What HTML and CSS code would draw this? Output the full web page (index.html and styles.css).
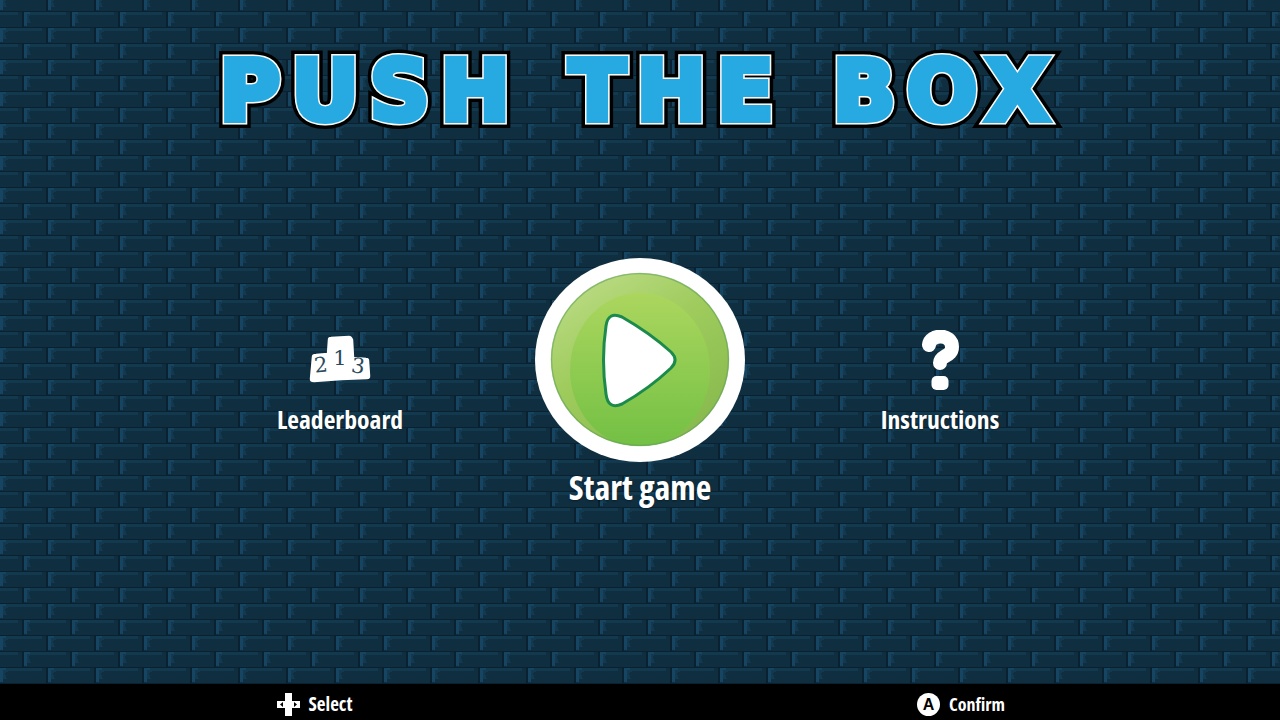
FILE: index.html
```html
<!DOCTYPE html>
<html lang="en">
<head>
<meta charset="utf-8">
<title>Push the Box</title>
<link rel="stylesheet" href="styles.css">
</head>
<body>
<div class="screen">
  <header class="title-wrap">
    <h1 class="title"><span class="title-black">PUSH THE BOX</span><span class="title-white" aria-hidden="true">PUSH THE BOX</span><span class="title-blue" aria-hidden="true">PUSH THE BOX</span></h1>
  </header>
  <main class="menu">
    <div class="item item-side">
      <svg class="icon" width="64" height="62" viewBox="0 -5 64 62">
        <path class="podium" d="M5 22 Q5 20 8 20 L20 19 L21 5 Q21 3 23 3 L41 2 Q43 2 44 5 L45 23 L58 24 Q60 24 60 26 L61 41 Q61 43 59 43 L33 44 L6 46 Q3 46 3 44 Z"/>
        <text class="digit" x="13" y="37" transform="rotate(-6 13 30)">2</text>
        <text class="digit" x="32" y="30">1</text>
        <text class="digit" x="50" y="38" transform="rotate(8 50 32)">3</text>
      </svg>
      <span class="label">Leaderboard</span>
    </div>
    <div class="item">
      <svg class="play" width="210" height="204" viewBox="0 0 210 204">
        <defs>
          <linearGradient id="rim" x1="0.15" y1="0" x2="0.8" y2="1">
            <stop offset="0" stop-color="#bcdc86"/>
            <stop offset="0.45" stop-color="#9ecb5c"/>
            <stop offset="1" stop-color="#86b84d"/>
          </linearGradient>
          <linearGradient id="core" x1="0" y1="0" x2="0" y2="1">
            <stop offset="0" stop-color="#acd65e"/>
            <stop offset="1" stop-color="#72c044"/>
          </linearGradient>
          <clipPath id="face"><ellipse cx="105" cy="101.500" rx="89" ry="86.500"/></clipPath>
        </defs>
        <ellipse class="disc" cx="105" cy="102" rx="105" ry="102"/>
        <ellipse cx="105" cy="101.500" rx="89" ry="86.500" fill="url(#rim)"/>
        <ellipse cx="105" cy="112" rx="70" ry="77" fill="url(#core)" clip-path="url(#face)"/>
        <ellipse cx="105" cy="101.500" rx="88.500" ry="86" fill="none" stroke="#5f9f58" stroke-opacity=".55" stroke-width="1.500"/>
        <path class="arrow" d="M71 68 Q73 53 87 59 Q115 75 136 94 Q144 102 136 110 Q115 130 87 146 Q73 152 71 136 Q66 102 71 68 Z"/>
      </svg>
      <span class="label label-main">Start game</span>
    </div>
    <div class="item item-side">
      <svg class="icon" width="64" height="62" viewBox="0 0 64 62">
        <path class="qmark" d="M21 15 C22 4 44 3 44 17 C44 27 32 25 32 33"/>
        <rect class="qdot" x="23.500" y="46" width="17" height="14" rx="5"/>
      </svg>
      <span class="label">Instructions</span>
    </div>
  </main>
  <footer class="bar">
    <div class="hint hint-select">
      <svg width="23" height="23" viewBox="0 0 23 23">
        <path class="dpad" d="M8 0 H15 V8 H23 V15 H15 V23 H8 V15 H0 V8 H8 Z"/>
        <path class="dpad-arrow" d="M3 11.500 L6 9 V14 Z M20 11.500 L17 9 V14 Z"/>
      </svg>
      <span class="hint-text">Select</span>
    </div>
    <div class="hint hint-confirm">
      <span class="a-btn">A</span>
      <span class="hint-text">Confirm</span>
    </div>
  </footer>
</div>
</body>
</html>
```
FILE: styles.css
```css
* { box-sizing: border-box; }
html, body { margin: 0; height: 100%; }
body {
  overflow: hidden;
  background-color: #0f2f41;
  font-family: "Open Sans", sans-serif;
  font-stretch: 75%;
  color: #fff;
}
.screen {
  width: 1280px;
  height: 720px;
  display: flex;
  flex-direction: column;
  background-color: #0f2f41;
  background-image: url("data:image/svg+xml,%3Csvg xmlns='http://www.w3.org/2000/svg' width='48' height='32' shape-rendering='crispEdges'%3E%3Crect width='48' height='32' fill='%23092130'/%3E%3Cpath fill='%230f2f41' d='M24 12H48V27H24ZM0 12H22V27H0ZM0 0H46V11H0ZM0 28H46V32H0Z'/%3E%3Cpath fill='%2312394e' d='M24 12H48V15H24ZM0 12H18V15H0ZM0 28H42V31H0ZM27 15H30L29 18L31 23H27ZM3 0H6L5 2L7 7H3ZM3 31H9L7 32H3Z'/%3E%3Cpath fill='%23154560' d='M24 12H30V14H27V26H24ZM0 28H6V30H3V32H0ZM0 0H3V10H0Z'/%3E%3C/svg%3E");
}
.title-wrap {
  height: 160px;
  display: flex;
  justify-content: center;
  flex: none;
}
.title {
  position: relative;
  margin: 42px 0 0;
  font-family: "DejaVu Sans", sans-serif;
  font-stretch: normal;
  font-weight: 700;
  font-size: 83px;
  line-height: 100px;
  letter-spacing: 11px;
  word-spacing: 8px;
  white-space: pre;
  paint-order: stroke;
}
.title-black { -webkit-text-stroke: 16px #000; color: #000; }
.title-white, .title-blue {
  position: absolute;
  left: 0;
  top: 0;
}
.title-white { -webkit-text-stroke: 9px #fff; color: #fff; }
.title-blue { -webkit-text-stroke: 6px #27aae1; color: #27aae1; }
.menu {
  flex: 1;
  display: grid;
  grid-template-columns: repeat(3, 300px);
  justify-content: center;
  align-items: start;
  padding-top: 98px;
}
.item {
  display: flex;
  flex-direction: column;
  align-items: center;
}
.item-side { margin-top: 72px; }
.icon { display: block; }
.play { display: block; }
.label { font-weight: 700; font-size: 25.600px; line-height: 34px; margin-top: 11px; text-shadow: 0 1px 2px rgba(0,0,0,.4); }
.label-main { font-size: 34px; line-height: 44px; margin-top: 3px; }
.podium { fill: #fff; stroke: #fff; stroke-width: 2.500; stroke-linejoin: round; }
.digit { font: 400 21px "DejaVu Serif", serif; fill: #2a4a5c; text-anchor: middle; }
.disc { fill: #fff; }
.arrow { fill: #fff; stroke: #1c8a4b; stroke-width: 3; stroke-linejoin: round; }
.qmark { fill: none; stroke: #fff; stroke-width: 14; stroke-linecap: round; }
.qdot { fill: #fff; }
.bar {
  flex: none;
  height: 36px;
  background: #000;
  display: grid;
  grid-template-columns: 640px 640px;
  align-items: center;
  padding-top: 4px;
}
.hint { display: flex; align-items: center; justify-content: center; gap: 9px; }
.hint-select { margin-left: -11px; }
.hint-confirm { margin-left: 2px; }
.hint-text { font-weight: 700; font-size: 19px; line-height: 24px; }
.hint-confirm .hint-text { font-size: 18px; }
.dpad { fill: #fff; }
.dpad-arrow { fill: #000; }
.a-btn {
  width: 23px;
  height: 23px;
  border-radius: 50%;
  background: #fff;
  color: #000;
  font: 700 16px/23px "Liberation Sans", sans-serif;
  text-align: center;
}
```
